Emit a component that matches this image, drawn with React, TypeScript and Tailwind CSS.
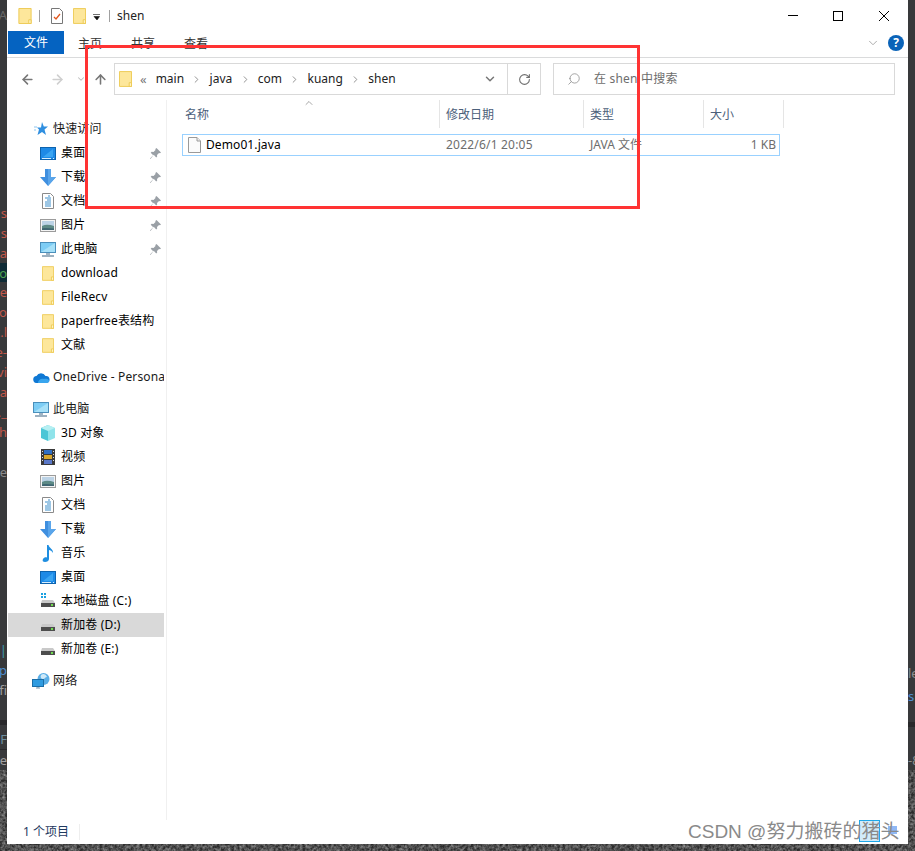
import React from 'react';
import { ArrowLeft, ArrowRight, ArrowUp, ChevronDown, ChevronRight, ChevronUp, RotateCw, Search } from 'lucide-react';

const uiFont = 'font-["Noto_Sans","Noto_Sans_CJK_SC",sans-serif]';

const Folder: React.FC<{ w?: number; h?: number }> = ({ w = 14, h = 17 }) => (
  <svg width={w} height={h} viewBox="0 0 14 17" className="shrink-0">
    <path d="M.5.5h13v16H.5z" fill="#fde79b" stroke="#edc951" />
    <path d="M11 16.500v-4h2.500v4z" fill="#fff3c4" stroke="#edc951" />
  </svg>
);

const Desktop = () => (
  <svg width="16" height="13" viewBox="0 0 16 13">
    <rect x=".5" y=".5" width="15" height="12" fill="#1e8ae6" stroke="#0d63ae" />
    <path d="M3 10 13 2v8z" fill="#3aa5f2" />
    <path d="M2 11.500h9M13 11.500h1" stroke="#d8eefc" />
  </svg>
);

const Download = () => (
  <svg width="16" height="17" viewBox="0 0 16 17">
    <path d="M5 0h6v8h5l-8 9-8-9h5z" fill="#3f8fdf" />
    <path d="M8 0h3v8h5l-8 9z" fill="#5aa5ea" />
  </svg>
);

const Doc = () => (
  <svg width="12" height="16" viewBox="0 0 12 16">
    <path d="M.5.5h8l3 3v12H.5z" fill="#fff" stroke="#8a8a8a" />
    <path d="M6 3h2M3 5h6M5 7h4M3 9h6M3 11h6M3 13h6" stroke="#3d8fcb" />
  </svg>
);

const Pictures = () => (
  <svg width="16" height="13" viewBox="0 0 16 13">
    <rect x=".5" y=".5" width="15" height="12" fill="#f4f4f4" stroke="#9b9b9b" />
    <rect x="2" y="2" width="12" height="9" fill="#bcd3e6" />
    <path d="M2 7c4-2 8-1 12 0v4H2z" fill="#5d8a86" />
    <path d="M2 9.500c4-1 8 0 12 0V11H2z" fill="#3f6672" />
  </svg>
);

const Monitor = () => (
  <svg width="16" height="15" viewBox="0 0 16 15">
    <rect x=".5" y=".5" width="15" height="10" fill="#7dcdf5" stroke="#4a8fbb" />
    <path d="M1 10 15 1v9z" fill="#a6e0f8" />
    <path d="M6 11h4v2H6z" fill="#9fb4c4" />
    <path d="M2 14h12" stroke="#7c97ab" strokeWidth="1.500" />
  </svg>
);

const Cube = () => (
  <svg width="16" height="16" viewBox="0 0 16 16">
    <path d="M8 0 1 3v10l7 3z" fill="#4cc6d6" />
    <path d="m8 0 7 3v10l-7 3z" fill="#8fe3ea" />
    <path d="M8 6 1 3l7-3 7 3z" fill="#b6eff2" />
  </svg>
);

const Film = () => (
  <svg width="14" height="16" viewBox="0 0 14 16">
    <rect width="14" height="16" fill="#3a3a3a" />
    <path d="M1 2h1v1H1zM1 5h1v1H1zM1 8h1v1H1zM1 11h1v1H1zM12 2h1v1h-1zM12 5h1v1h-1zM12 8h1v1h-1zM12 11h1v1h-1z" fill="#ddd" />
    <rect x="3" y="1" width="8" height="4" fill="#2f6fc4" />
    <rect x="3" y="6" width="8" height="4" fill="#d9a82d" />
    <rect x="3" y="11" width="8" height="4" fill="#5a78c8" />
  </svg>
);

const Music = () => (
  <svg width="12" height="17" viewBox="0 0 12 17">
    <path d="M5 0h1.500c.5 3 5 4 4.500 8-1-2-3-3-4-3v9c0 2-2 3-4 3s-3-1-2-3 3-2 4-1.500z" fill="#1f8ee0" />
  </svg>
);

const Drive: React.FC<{ win?: boolean }> = ({ win }) => (
  <svg width="16" height="16" viewBox="0 0 16 16">
    {win && <path d="M1 0h2v2H1zM4 0h2v2H4zM1 3h2v2H1zM4 3h2v2H4z" fill="#1ba1e2" />}
    <path d="M2 7h11l2 3H1z" fill="#c9c9c9" />
    <rect x="1" y="10" width="14" height="4" fill="#4d4d4d" />
    <rect x="11" y="11" width="2" height="2" fill="#6fdc4f" />
  </svg>
);

const Network = () => (
  <svg width="18" height="17" viewBox="0 0 18 17">
    <circle cx="11.500" cy="6" r="6" fill="#5aaee6" />
    <path d="M9 2c2-2 5-1 6 2-2 0-2 2-4 2S8 4 9 2z" fill="#cfe9f8" />
    <rect x=".5" y="6.500" width="11" height="7" fill="#2f9be0" stroke="#1b6ea8" />
    <path d="M4 15h4M6 14v1" stroke="#7c97ab" />
  </svg>
);

const Cloud = () => (
  <svg width="17" height="11" viewBox="0 0 17 11">
    <path d="M4 11a3.500 3.500 0 0 1-.5-7A5 5 0 0 1 12.500 4 3.500 3.500 0 0 1 13.500 11z" fill="#0f78d4" />
    <path d="M5 11c0-3 3-5 6-4 2-1 6 0 5 3l-2 1z" fill="#38a5ee" />
  </svg>
);

const Star = () => (
  <svg width="14" height="14" viewBox="0 0 14 14" className="shrink-0">
    <path d="m8 0 1.800 4.500H14l-3.500 3L12 13 8 10l-4.500 3 1.500-5.500-2-2h4z" fill="#2f8fe0" />
    <path d="M0 5h3M0 8h2" stroke="#8cc4ef" />
  </svg>
);

const Pin = () => (
  <svg width="11" height="11" viewBox="0 0 11 11">
    <path d="m6.500 0 4.500 4.500-1 .7-1-.2L7 7l.2 1.500-1 1-2.500-2.700L.5 11 0 10.500l3.200-3.300L.7 4.700l1-1L3.500 4l2-2-.2-1z" fill="#9aa0a6" />
  </svg>
);

type NavItem = { label: string; icon: React.ReactNode; pin?: boolean; selected?: boolean };

const quickAccess: NavItem[] = [
  { label: '桌面', icon: <Desktop />, pin: true },
  { label: '下载', icon: <Download />, pin: true },
  { label: '文档', icon: <Doc />, pin: true },
  { label: '图片', icon: <Pictures />, pin: true },
  { label: '此电脑', icon: <Monitor />, pin: true },
  { label: 'download', icon: <Folder w={12} h={15} /> },
  { label: 'FileRecv', icon: <Folder w={12} h={15} /> },
  { label: 'paperfree表结构', icon: <Folder w={12} h={15} /> },
  { label: '文献', icon: <Folder w={12} h={15} /> },
];

const thisPc: NavItem[] = [
  { label: '3D 对象', icon: <Cube /> },
  { label: '视频', icon: <Film /> },
  { label: '图片', icon: <Pictures /> },
  { label: '文档', icon: <Doc /> },
  { label: '下载', icon: <Download /> },
  { label: '音乐', icon: <Music /> },
  { label: '桌面', icon: <Desktop /> },
  { label: '本地磁盘 (C:)', icon: <Drive win /> },
  { label: '新加卷 (D:)', icon: <Drive />, selected: true },
  { label: '新加卷 (E:)', icon: <Drive /> },
];

const NavHeader: React.FC<{ label: string; icon: React.ReactNode }> = ({ label, icon }) => (
  <div className="flex h-6 items-center overflow-hidden pl-6 tracking-[0.15px] whitespace-nowrap text-[#1a1a1a]">
    <span className="flex w-[18px] shrink-0 justify-center">{icon}</span>
    <span className="ml-[3px]">{label}</span>
  </div>
);

const NavRow: React.FC<{ item: NavItem }> = ({ item }) => (
  <div className={`flex h-6 items-center overflow-hidden pl-8 tracking-[0.15px] whitespace-nowrap text-black ${item.selected ? 'bg-[#d9d9d9]' : ''}`}>
    <span className="flex w-4 shrink-0 justify-center">{item.icon}</span>
    <span className="ml-[5px]">{item.label}</span>
    {item.pin && (
      <span className="ml-auto pr-[3px]">
        <Pin />
      </span>
    )}
  </div>
);

const Crumb: React.FC<{ label: string }> = ({ label }) => (
  <>
    <span>{label}</span>
    <ChevronRight size={11} strokeWidth={2} className="mx-[7.25px] text-[#8a8a8a]" />
  </>
);

// text of the editor behind the window, cut by the window's left edge
const leftRow = 'flex h-5 justify-end overflow-hidden text-[13px] leading-5 whitespace-nowrap font-["Noto_Sans",sans-serif]';
const rightRow = 'h-5 overflow-hidden text-[13px] leading-5 whitespace-nowrap font-["Noto_Sans",sans-serif]';

const App: React.FC = () => {
  return (
    <div className={`relative h-[851px] w-[915px] overflow-hidden bg-[#4a4a4a] text-[12px] ${uiFont}`}>
      {/* wallpaper showing under the editor behind the window */}
      <svg className="absolute inset-0" width="915" height="851">
        <filter id="rock">
          <feTurbulence type="fractalNoise" baseFrequency="0.35" numOctaves="3" seed="4" />
          <feColorMatrix values="0 0 0 0 0.3  0 0 0 0 0.3  0 0 0 0 0.3  1.600 0 0 0 -0.450" />
        </filter>
        <rect width="915" height="851" fill="#2c2c2c" />
        <rect width="915" height="851" fill="#8b8b8b" filter="url(#rock)" />
      </svg>

      <div className="relative flex h-[844px]">
        {/* editor behind, left edge */}
        <div className="flex h-[770px] w-[7px] shrink-0 flex-col overflow-hidden bg-[#38393b]">
          <div className={`${leftRow} mt-[5px] text-[#686868]`}>\A</div>
          <div className="h-[178px] shrink-0" />
          <div className={`${leftRow} text-[#c0574a]`}>s</div>
          <div className={`${leftRow} text-[#c0574a]`}>s</div>
          <div className={`${leftRow} text-[#c0574a]`}>ta</div>
          <div className={`${leftRow} bg-[#0f2b36] text-[#4fa34f]`}>oo</div>
          <div className={`${leftRow} text-[#c0574a]`}>e</div>
          <div className={`${leftRow} text-[#c0574a]`}>-o</div>
          <div className={`${leftRow} text-[#c0574a]`}>x.l</div>
          <div className={`${leftRow} text-[#c0574a]`}>e-</div>
          <div className={`${leftRow} text-[#c0574a]`}>vi</div>
          <div className={`${leftRow} text-[#c0574a]`}>a</div>
          <div className={`${leftRow} text-[#c0574a]`}>t._</div>
          <div className={`${leftRow} text-[#c0574a]`}>sh</div>
          <div className="h-5 shrink-0" />
          <div className={`${leftRow} text-[#8a8a8a]`}>ee</div>
          <div className="h-[159px] shrink-0" />
          <div className={`${leftRow} text-[#3f9bb0]`}>|</div>
          <div className={`${leftRow} text-[#4f8fd0]`}>p</div>
          <div className={`${leftRow} text-[#a0a0a0]`}>fi</div>
          <div className="h-[20px] shrink-0" />
          <div className="h-[5px] shrink-0 bg-[#29292b]" />
          <div className={`${leftRow} mt-1 text-[#6d8fa0]`}>F</div>
          <div className="h-px shrink-0 bg-[#29292b]" />
          <div className={`${leftRow} text-[#a0a0a0]`}>e</div>
        </div>

        {/* explorer window */}
        <div className="flex h-[844px] w-[901px] shrink-0 flex-col bg-white">
          {/* title bar */}
          <div className="flex h-[31px] shrink-0 items-center">
            <span className="ml-[11px]">
              <Folder w={14} h={16} />
            </span>
            <span className="ml-[7px] h-3 w-px bg-[#a0a0a0]" />
            <svg width="12" height="16" viewBox="0 0 12 16" className="ml-[11px]">
              <path d="M.5.5h8l3 3v12H.5z" fill="#fff" stroke="#777" />
              <path d="m3 9 2 2 4-5" fill="none" stroke="#e2571e" strokeWidth="1.300" />
            </svg>
            <span className="ml-[10px]">
              <Folder w={13} h={16} />
            </span>
            <svg width="8" height="6" viewBox="0 0 8 6" className="ml-[7px] mt-[3px]">
              <path d="M0 .5h7M1 2.500h5.500L4 6z" fill="#111" stroke="#111" strokeWidth=".6" />
            </svg>
            <span className="ml-[8px] h-3 w-px bg-[#a0a0a0]" />
            <span className="ml-[7px] text-[#222]">shen</span>
            <div className="ml-auto flex items-center pr-[19px]">
              <span className="h-px w-[10px] bg-black" />
              <span className="ml-[35px] h-[10px] w-[10px] border border-black" />
              <svg width="10" height="10" viewBox="0 0 10 10" className="ml-[36px]">
                <path d="m0 0 10 10M10 0 0 10" stroke="#000" strokeWidth="1" />
              </svg>
            </div>
          </div>

          {/* ribbon tabs */}
          <div className="flex h-[27px] shrink-0 items-start border-b border-[#dadbdc] pl-px text-[#333]">
            <div className="flex h-[23px] w-14 items-center justify-center bg-[#0563c1] text-white">文件</div>
            <div className="flex h-[23px] items-center pt-[2px]">
              <span className="ml-[14px]">主页</span>
              <span className="ml-[29px]">共享</span>
              <span className="ml-[29px]">查看</span>
            </div>
            <div className="ml-auto flex h-[23px] items-center pr-1">
              <ChevronDown size={14} strokeWidth={1.500} className="text-[#a0a0a0]" />
              <span className="ml-2 flex h-4 w-4 items-center justify-center rounded-full bg-[#0a63b8] text-[12px] leading-none font-bold text-white">?</span>
            </div>
          </div>

          {/* address row */}
          <div className="mt-[5px] flex h-8 shrink-0 items-center">
            <ArrowLeft size={15} strokeWidth={2.500} className="ml-[13px] text-[#777]" />
            <ArrowRight size={15} strokeWidth={2.500} className="ml-[15px] text-[#cfcfcf]" />
            <ChevronDown size={10} strokeWidth={2.500} className="ml-[11px] text-[#bdbdbd]" />
            <ArrowUp size={15} strokeWidth={2.500} className="ml-[7px] text-[#777]" />
            <div className="ml-[6px] flex h-8 w-[427px] items-center border border-[#d9d9d9]">
              <span className="ml-1">
                <Folder w={13} h={16} />
              </span>
              <span className="ml-2 text-[13px] leading-none text-[#777]">«</span>
              <div className="ml-[9px] flex items-center text-[#222]">
                <Crumb label="main" />
                <Crumb label="java" />
                <Crumb label="com" />
                <Crumb label="kuang" />
                <span>shen</span>
              </div>
              <ChevronDown size={14} strokeWidth={2.500} className="mr-[10px] ml-auto text-[#777]" />
              <div className="flex h-full w-[33px] items-center justify-center border-l border-[#d9d9d9]">
                <RotateCw size={13} strokeWidth={2} className="text-[#6f6f6f]" />
              </div>
            </div>
            <div className="ml-3 flex h-8 w-[342px] items-center border border-[#d9d9d9] text-[#6d6d6d]">
              <Search size={14} strokeWidth={1.300} className="ml-[13px] -scale-x-100 text-[#8a8a8a]" />
              <span className="ml-[13px] tracking-[0.2px]">在 shen 中搜索</span>
            </div>
          </div>

          {/* body */}
          <div className="mt-[5px] flex min-h-0 flex-1">
            <div className="ml-px w-[156px] shrink-0 pt-[17px]">
              <NavHeader label="快速访问" icon={<Star />} />
              {quickAccess.map((item) => (
                <NavRow key={item.label} item={item} />
              ))}
              <div className="mt-2">
                <NavHeader label="OneDrive - Personal" icon={<Cloud />} />
              </div>
              <div className="mt-2">
                <NavHeader label="此电脑" icon={<Monitor />} />
              </div>
              {thisPc.map((item) => (
                <NavRow key={item.label} item={item} />
              ))}
              <div className="mt-2">
                <NavHeader label="网络" icon={<Network />} />
              </div>
            </div>
            <div className="ml-[2px] w-px shrink-0 bg-[#f0f0f0]" />

            <div className="min-w-0 flex-1">
              <div className="relative grid h-[28px] grid-cols-[273px_144px_120px_80px] text-[#4c607a]">
                <ChevronUp size={12} strokeWidth={1.300} className="absolute top-[-3px] left-[136px] text-[#777]" />
                <div className="flex items-center border-r border-[#e5e5e5] pt-[2px] pl-[18px]">名称</div>
                <div className="flex items-center border-r border-[#e5e5e5] pt-[2px] pl-[6px]">修改日期</div>
                <div className="flex items-center border-r border-[#e5e5e5] pt-[2px] pl-[6px]">类型</div>
                <div className="flex items-center border-r border-[#e5e5e5] pt-[2px] pl-[6px]">大小</div>
              </div>
              <div className="mt-[6px] ml-[15px] grid h-[22px] w-[598px] grid-cols-[257px_144px_120px_1fr] items-center border border-[#99d1ff] text-[#6d6d6d]">
                <div className="flex items-center pl-[5px] text-black">
                  <svg width="13" height="16" viewBox="0 0 13 16">
                    <path d="M.5.500h8.500l3.500 3.500v11.500H.5z" fill="#fbfbfb" stroke="#9a9a9a" />
                    <path d="M9 .5V4h3.500" fill="#eee" stroke="#9a9a9a" />
                  </svg>
                  <span className="ml-[5px] tracking-[0.1px]">Demo01.java</span>
                </div>
                <div className="pl-[6px] tracking-[0.2px]">2022/6/1 20:05</div>
                <div className="pl-[6px]">JAVA 文件</div>
                <div className="pr-[3px] text-right">1 KB</div>
              </div>
            </div>
          </div>

          {/* status bar */}
          <div className="flex h-6 shrink-0 items-center text-[#1f3a5f]">
            <span className="ml-4">1 个项目</span>
            <span className="ml-[10px] h-4 w-px bg-[#eeeeee]" />
          </div>
        </div>

        {/* editor behind, right edge */}
        <div className="flex h-[770px] w-[7px] shrink-0 flex-col overflow-hidden bg-[#38393b]">
          <div className="h-[653px] shrink-0" />
          <div className={`${rightRow} mt-[10px] text-[#8f8f8f]`}>le</div>
          <div className={`${rightRow} mt-[3px] text-[#4f8fd0]`}>s</div>
          <div className="mt-[16px] h-[5px] shrink-0 bg-[#29292b]" />
          <div className={`${rightRow} mt-[23px] text-[#8f8f8f]`}>-8</div>
        </div>
      </div>

      {/* annotation box drawn over the screenshot */}
      <div className="pointer-events-none absolute top-[45px] left-[85px] h-[164px] w-[555px] border-[3px] border-[#ff3333]" />

      {/* watermark */}
      <div className="pointer-events-none absolute top-[820px] left-[859px] h-[22px] w-[21px] border border-[#1ea7e8] bg-[#bfe3f7]/70" />
      <div className="pointer-events-none absolute top-[826px] left-[888px] h-2 w-[9px] bg-[#8fb8f5]" />
      <div className='pointer-events-none absolute top-[820px] left-[688px] text-[19px] leading-6 whitespace-nowrap text-[#8a8a8a] font-["Liberation_Sans","Noto_Sans_CJK_SC",sans-serif]'>
        CSDN @努力搬砖的猪头
      </div>
    </div>
  );
};

export default App;
